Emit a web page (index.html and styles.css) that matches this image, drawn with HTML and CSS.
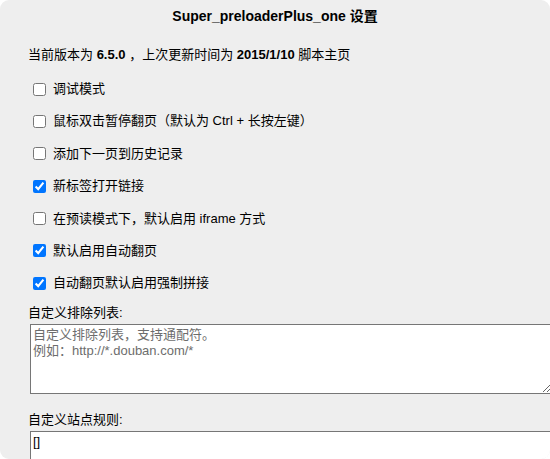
FILE: index.html
```html
<!DOCTYPE html>
<html lang="zh-CN">
<head>
<meta charset="utf-8">
<title>Super_preloaderPlus_one 设置</title>
<link rel="stylesheet" href="styles.css">
</head>
<body>
<div class="panel">
  <h1 class="title">Super_preloaderPlus_one 设置</h1>
  <div class="content">
    <div class="version">当前版本为 <b>6.5.0</b> ，上次更新时间为 <b>2015/1/10</b> 脚本主页</div>
    <ul class="options">
      <li><label><input type="checkbox"><span>调试模式</span></label></li>
      <li><label><input type="checkbox"><span>鼠标双击暂停翻页（默认为 Ctrl + 长按左键）</span></label></li>
      <li><label><input type="checkbox"><span>添加下一页到历史记录</span></label></li>
      <li><label><input type="checkbox" checked><span>新标签打开链接</span></label></li>
      <li><label><input type="checkbox"><span>在预读模式下，默认启用 iframe 方式</span></label></li>
      <li><label><input type="checkbox" checked><span>默认启用自动翻页</span></label></li>
      <li><label><input type="checkbox" checked><span>自动翻页默认启用强制拼接</span></label></li>
    </ul>
    <div class="field">
      <div class="field-label">自定义排除列表:</div>
      <textarea class="box exclude" placeholder="自定义排除列表，支持通配符。&#10;例如：http://*.douban.com/*"></textarea>
    </div>
    <div class="field second">
      <div class="field-label">自定义站点规则:</div>
      <textarea class="box rules">[]</textarea>
    </div>
  </div>
</div>
</body>
</html>
```
FILE: styles.css
```css
html, body {
  margin: 0;
  padding: 0;
  background: #ffffff;
}

body {
  font-family: "Liberation Sans", "Noto Sans CJK SC", sans-serif;
  font-size: 13px;
  color: #000;
}

.panel {
  width: 550px;
  height: 459px;
  background: #eeeeee;
  border-radius: 9px;
  overflow: hidden;
  box-sizing: border-box;
}

.title {
  margin: 0;
  padding-top: 6px;
  height: 20px;
  line-height: 20px;
  font-size: 14px;
  font-weight: bold;
  text-align: center;
}

.content {
  padding: 19px 0 0 28px;
}

.version {
  line-height: 20px;
  height: 20px;
  white-space: nowrap;
}

.options {
  list-style: none;
  margin: 0;
  padding: 14px 0 0 0;
  display: flex;
  flex-direction: column;
  gap: 12.4px;
}

.options li {
  height: 20px;
  line-height: 20px;
}

.options label {
  display: flex;
  align-items: center;
  white-space: nowrap;
}

.options input {
  margin: 0 7px 0 5px;
  width: 13px;
  height: 13px;
}

.field {
  margin-top: 11px;
}

.field.second {
  margin-top: 17px;
}

.field-label {
  line-height: 18px;
  height: 18px;
}

.box {
  display: block;
  margin: 2px 0 0 2px;
  width: 522px;
  box-sizing: border-box;
  border: 1px solid #767676;
  background: #fff;
  padding: 2px 2px;
  font-family: "Liberation Sans", "Noto Sans CJK SC", sans-serif;
  font-size: 13px;
  line-height: 16px;
  color: #000;
  resize: both;
  outline: none;
}

.box::placeholder {
  color: #6d6d6d;
}

.exclude {
  height: 70px;
}

.rules {
  height: 60px;
}
```
